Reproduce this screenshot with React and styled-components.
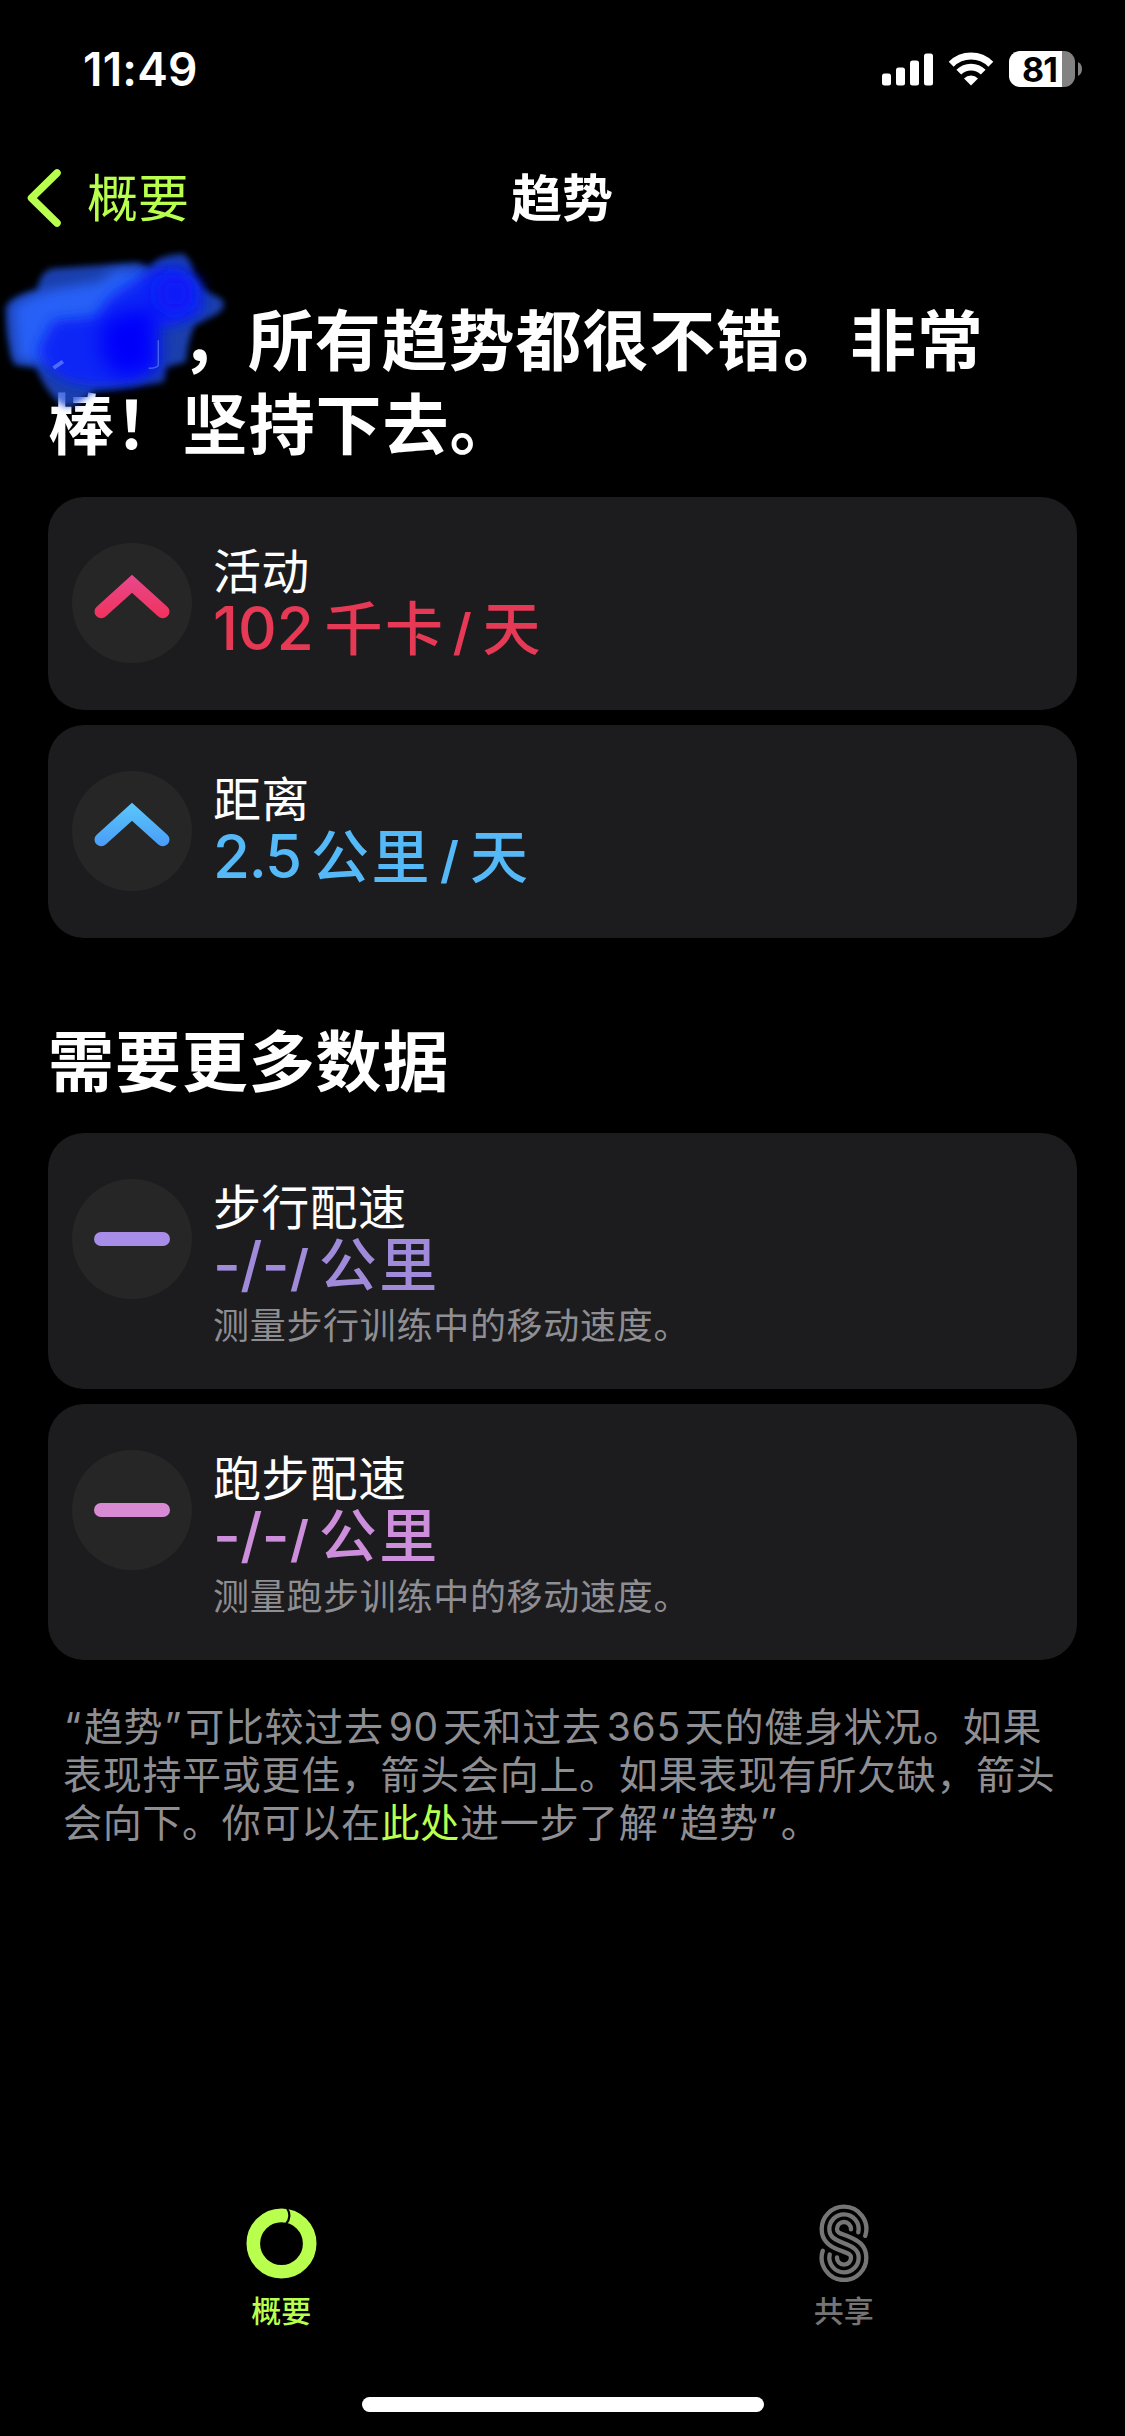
import React from "react";
import styled, { createGlobalStyle } from "styled-components";

const GlobalStyle = createGlobalStyle`
  body { margin: 0; background: #000; }
  * { box-sizing: border-box; }
`;

const Screen = styled.div`
  position: relative;
  width: 1125px;
  height: 2436px;
  background: #000;
  color: #fff;
  font-family: Inter, "Noto Sans CJK SC", sans-serif;
  display: flex;
  flex-direction: column;
  overflow: hidden;
`;

const StatusBar = styled.header`
  height: 138px;
  flex: none;
  padding: 0 43px 0 83px;
  display: flex;
  align-items: center;
  justify-content: space-between;
`;

const Clock = styled.time`
  font-size: 46px;
  font-weight: 600;
  line-height: 56px;
  letter-spacing: 0.2px;
`;

const StatusIcons = styled.div`
  display: flex;
  align-items: center;
  gap: 15px;
`;

const Battery = styled.div`
  display: flex;
  align-items: center;
  gap: 3px;
`;

const BatteryBody = styled.div`
  width: 66px;
  height: 36px;
  border-radius: 11px;
  background: linear-gradient(90deg, #fff 53px, #828282 53px);
  color: #000;
  font-size: 34px;
  font-weight: 700;
  line-height: 37px;
  letter-spacing: -1px;
  padding-left: 13px;
`;

const NavBar = styled.nav`
  height: 118px;
  flex: none;
  display: grid;
  grid-template-columns: 1fr auto 1fr;
  align-items: center;
  padding: 2px 28px 0 27px;
`;

const BackButton = styled.a`
  display: flex;
  align-items: center;
  gap: 26px;
  color: #b9ff4e;
  font-size: 51px;
  line-height: 74px;
`;

const NavTitle = styled.h1`
  margin: 0;
  padding-top: 2px;
  font-size: 51px;
  font-weight: 600;
  line-height: 72px;
`;

const BackLabel = styled.span`
  padding-top: 2px;
`;

const Content = styled.main`
  flex: 1;
  padding: 38px 48px 0;
  display: flex;
  flex-direction: column;
`;

const Heading = styled.h2`
  margin: 0;
  font-family: "Noto Sans CJK SC", sans-serif;
  font-size: 66px;
  font-weight: 600;
  line-height: 84px;
  letter-spacing: 0.9px;
`;

const HiddenName = styled.span`
  display: inline-block;
  width: 133px;
`;

const Scribble = styled.svg`
  position: absolute;
  left: 0;
  top: 240px;
  width: 243px;
  height: 187px;
`;

const CardList = styled.section`
  display: flex;
  flex-direction: column;
  gap: 15px;
  margin: ${(p) => p.$margin};
`;

const Card = styled.article`
  height: ${(p) => (p.$tall ? 256 : 213)}px;
  border-radius: 36px;
  background: #1c1c1e;
  padding: 46px 24px 0;
  display: flex;
  gap: 21px;
`;

const Badge = styled.div`
  width: 120px;
  height: 120px;
  flex: none;
  border-radius: 50%;
  background: #262626;
  display: flex;
  align-items: center;
  justify-content: center;
`;

const Dash = styled.div`
  width: 76px;
  height: 14px;
  border-radius: 7px;
  background: ${(p) => p.$color};
`;

const CardText = styled.div`
  display: flex;
  flex-direction: column;
`;

const CardTitle = styled.h3`
  margin: 0;
  padding-top: 1px;
  font-size: 48px;
  font-weight: 400;
  line-height: 56px;
  letter-spacing: 0.3px;
`;

const Value = styled.div`
  display: flex;
  align-items: baseline;
  height: 54px;
  padding-top: 3px;
  line-height: 50px;
  font-size: 60px;
  font-weight: 500;
  color: ${(p) => p.$color};
`;

const Figure = styled.span`
  letter-spacing: ${(p) => p.$track || 0}px;
`;

const Unit = styled.span`
  margin-left: ${(p) => p.$before || 0}px;
  font-size: 58px;
  letter-spacing: 2.5px;
`;

const Slash = styled.span`
  margin-left: ${(p) => p.$before || 0}px;
  font-size: 50px;
  font-weight: 600;
`;

const Description = styled.p`
  margin: 0;
  padding-top: 10px;
  color: #8e8e93;
  font-size: 36px;
  line-height: 52px;
  letter-spacing: 0.7px;
`;

const Note = styled.p`
  margin: 0;
  padding: 43px 0 0 15px;
  color: #8e8e93;
  font-size: 39px;
  line-height: 48px;
  letter-spacing: 0.7px;
  white-space: nowrap;
`;

const OpenQuote = styled.span`
  margin: 0 2px 0 1px;
`;

const CloseQuote = styled.span`
  margin: 0 3px 0 1px;
`;

const Num = styled.span`
  margin: 0 4px 0 5px;
`;

const Link = styled.a`
  color: #b9ff4e;
`;

const TabBar = styled.footer`
  flex: none;
  height: 256px;
  display: grid;
  grid-template-columns: 1fr 1fr;
`;

const Tab = styled.div`
  display: flex;
  flex-direction: column;
  align-items: center;
  gap: 7px;
  padding-top: 23px;
  color: ${(p) => p.$color};
  font-size: 30px;
  font-weight: 500;
  line-height: 44px;
`;

const HomeIndicator = styled.div`
  position: absolute;
  left: 362px;
  bottom: 24px;
  width: 402px;
  height: 15px;
  border-radius: 8px;
  background: #fff;
`;

function SignalIcon() {
  return (
    <svg width="51" height="33" viewBox="0 0 51 33" fill="#fff">
      <rect x="0" y="20.5" width="9" height="12" rx="2.5" />
      <rect x="14" y="14.5" width="9" height="18" rx="2.5" />
      <rect x="28" y="7.5" width="9" height="25" rx="2.5" />
      <rect x="42" y="0.5" width="9" height="32" rx="2.5" />
    </svg>
  );
}

function WifiIcon() {
  return (
    <svg width="46" height="34" viewBox="0 0 46 34" fill="none">
      <path d="M3.2 12.2 A28 28 0 0 1 42.8 12.2" stroke="#fff" strokeWidth="7" />
      <path d="M10.8 20.2 A17.2 17.2 0 0 1 35.2 20.2" stroke="#fff" strokeWidth="6.8" />
      <path d="M23 33.5 L16 26.4 A10 10 0 0 1 30 26.4 Z" fill="#fff" />
    </svg>
  );
}

function UpArrow({ id, from, to }) {
  return (
    <svg width="120" height="120" viewBox="0 0 120 120" fill="none">
      <defs>
        <linearGradient id={id} gradientUnits="userSpaceOnUse" x1="60" y1="32" x2="60" y2="75">
          <stop offset="0" stopColor={from} />
          <stop offset="1" stopColor={to} />
        </linearGradient>
      </defs>
      <path
        d="M29.2 68.6 L60 40.7 L90.8 68.6"
        stroke={`url(#${id})`}
        strokeWidth="13.4"
        strokeLinecap="round"
      />
    </svg>
  );
}

function RingIcon() {
  return (
    <svg width="76" height="79" viewBox="0 0 76 79" fill="none">
      <circle cx="38.5" cy="40.6" r="28.2" stroke="#b9ff4e" strokeWidth="13.6" />
      <path d="M43.6 4.5 Q49.8 13.5 42.6 21.5" stroke="#000" strokeWidth="2.2" />
    </svg>
  );
}

function SharingIcon() {
  const outer =
    "M253.7 167.7 A67 67 0 0 0 190 80 A67 67 0 0 0 123 147 C123 185 150 200 175 210 S211 220 211 233 A21 21 0 0 1 190 254 A21 21 0 0 1 169 232";
  return (
    <svg width="50" height="79" viewBox="115 69 150 237" fill="none">
      <g stroke="#757575" strokeWidth="13" strokeLinecap="round">
        <path d={outer} />
        <path d="M232.8 157 A44 44 0 0 0 190 103 A44 44 0 0 0 146 147 C146 172 165 180 190 190 S234 208 234 233 A44 44 0 0 1 190 277 A44 44 0 0 1 147.2 223" />
        <path d={outer} transform="rotate(180 190 190)" />
      </g>
    </svg>
  );
}

function ScribbleMark() {
  return (
    <Scribble viewBox="0 0 680 560" preserveAspectRatio="none">
      <defs>
        <filter id="soft" filterUnits="userSpaceOnUse" x="-40" y="-40" width="760" height="640">
          <feGaussianBlur stdDeviation="9" />
        </filter>
        <filter id="softer" filterUnits="userSpaceOnUse" x="-40" y="-40" width="760" height="640">
          <feGaussianBlur stdDeviation="18" />
        </filter>
        <filter id="softest" filterUnits="userSpaceOnUse" x="-40" y="-40" width="760" height="640">
          <feGaussianBlur stdDeviation="28" />
        </filter>
      </defs>
      <path
        filter="url(#soft)"
        fill="#2050d8"
        fillOpacity="0.8"
        d="M18 200 Q30 170 105 150 Q110 92 150 85 L250 78 L385 68 L420 85 Q435 45 515 42 Q540 70 540 100 L570 150 L622 178 Q635 200 610 220 L545 255 Q525 300 520 365 L465 380 L458 425 L330 445 L265 450 Q210 505 180 500 Q130 460 100 380 L40 372 Q15 300 18 200 Z"
      />
      <path
        filter="url(#softer)"
        fill="#2860f6"
        d="M35 200 Q90 160 160 145 L280 125 L320 90 L410 90 L410 240 L300 330 L130 365 L50 360 Z"
      />
      <path
        filter="url(#softer)"
        fill="#0c26f6"
        d="M150 240 L270 230 L310 170 L380 120 L425 85 L500 80 L560 130 L565 215 L500 250 L440 262 L440 380 L380 425 L270 440 L190 425 L130 385 L105 330 Z"
      />
      <path
        filter="url(#softest)"
        fill="#0004fa"
        d="M290 235 L430 200 L435 390 L330 410 L280 340 Z"
      />
      <ellipse cx="490" cy="160" rx="52" ry="60" fill="#0818f8" filter="url(#softest)" />
      <path d="M150 383 L176 364" stroke="#4f6cff" strokeWidth="11" />
      <path d="M443 300 L443 375 Q440 384 416 384" stroke="#4462fa" strokeWidth="4" fill="none" />
    </Scribble>
  );
}

function TrendCard({ badge, title, value, color, description }) {
  return (
    <Card $tall={Boolean(description)}>
      <Badge>{badge}</Badge>
      <CardText>
        <CardTitle>{title}</CardTitle>
        <Value $color={color}>{value}</Value>
        {description && <Description>{description}</Description>}
      </CardText>
    </Card>
  );
}

function Quoted({ children }) {
  return (
    <>
      <OpenQuote>“</OpenQuote>
      {children}
      <CloseQuote>”</CloseQuote>
    </>
  );
}

const emptyPace = (
  <>
    <Figure $track={-0.6}>-/-</Figure>
    <Slash $before={1}>/</Slash>
    <Unit $before={10}>公里</Unit>
  </>
);

export default function App() {
  return (
    <Screen lang="zh-CN">
      <GlobalStyle />
      <StatusBar>
        <Clock>11:49</Clock>
        <StatusIcons>
          <SignalIcon />
          <WifiIcon />
          <Battery>
            <BatteryBody>81</BatteryBody>
            <svg width="4" height="14" viewBox="0 0 4 14">
              <path d="M0 0 Q4 2 4 7 Q4 12 0 14 Z" fill="#828282" />
            </svg>
          </Battery>
        </StatusIcons>
      </StatusBar>
      <NavBar>
        <BackButton>
          <svg width="34" height="58" viewBox="0 0 34 58" fill="none">
            <path
              d="M30 4 L4.5 29 L30 54"
              stroke="#b9ff4e"
              strokeWidth="7.5"
              strokeLinecap="round"
              strokeLinejoin="round"
            />
          </svg>
          <BackLabel>概要</BackLabel>
        </BackButton>
        <NavTitle>趋势</NavTitle>
        <span />
      </NavBar>
      <Content>
        <Heading>
          <HiddenName />，所有趋势都很不错。非常
          <br />
          棒！坚持下去。
        </Heading>
        <CardList $margin="35px 0 77px">
          <TrendCard
            badge={<UpArrow id="move" from="#e8488f" to="#f1325c" />}
            title="活动"
            color="#e63956"
            value={
              <>
                <Figure>102</Figure>
                <Unit $before={11}>千卡</Unit>
                <Slash $before={7}>/</Slash>
                <Unit $before={11}>天</Unit>
              </>
            }
          />
          <TrendCard
            badge={<UpArrow id="distance" from="#5ac8fa" to="#4a9cf8" />}
            title="距离"
            color="#55b9f8"
            value={
              <>
                <Figure $track={-1.2}>2.5</Figure>
                <Unit $before={10}>公里</Unit>
                <Slash $before={8}>/</Slash>
                <Unit $before={11}>天</Unit>
              </>
            }
          />
        </CardList>
        <Heading>需要更多数据</Heading>
        <CardList $margin="34px 0 0">
          <TrendCard
            badge={<Dash $color="#a78ce8" />}
            title="步行配速"
            color="#9f8bd9"
            value={emptyPace}
            description="测量步行训练中的移动速度。"
          />
          <TrendCard
            badge={<Dash $color="#d88bd2" />}
            title="跑步配速"
            color="#cd8fdc"
            value={emptyPace}
            description="测量跑步训练中的移动速度。"
          />
        </CardList>
        <Note>
          <Quoted>趋势</Quoted>可比较过去<Num>90</Num>天和过去<Num>365</Num>天的健身状况。如果
          <br />
          表现持平或更佳，箭头会向上。如果表现有所欠缺，箭头
          <br />
          会向下。你可以在<Link>此处</Link>进一步了解<Quoted>趋势</Quoted>。
        </Note>
      </Content>
      <TabBar>
        <Tab $color="#b9ff4e">
          <RingIcon />
          <span>概要</span>
        </Tab>
        <Tab $color="#757575">
          <SharingIcon />
          <span>共享</span>
        </Tab>
      </TabBar>
      <ScribbleMark />
      <HomeIndicator />
    </Screen>
  );
}
